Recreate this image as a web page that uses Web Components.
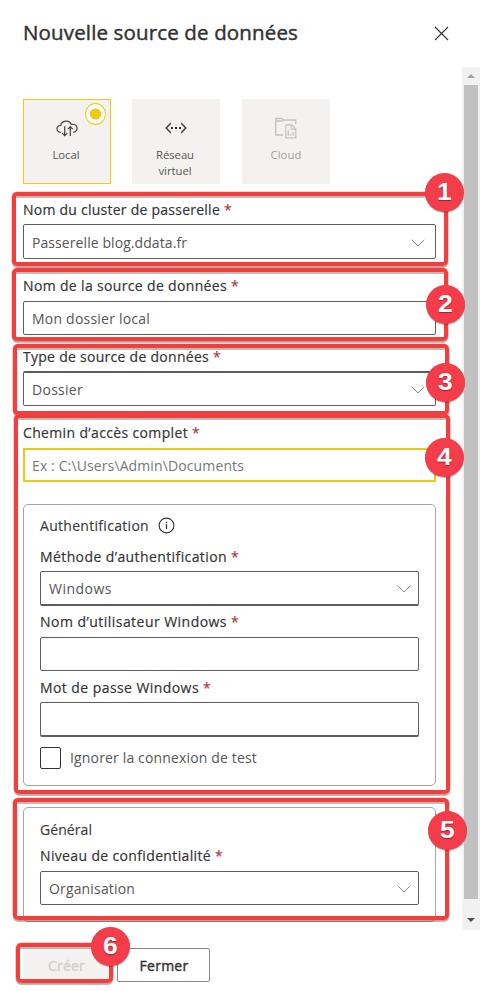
<!DOCTYPE html>
<html lang="fr">
<head>
<meta charset="utf-8">
<title>Nouvelle source de données</title>
<style>
html,body{margin:0;width:480px;height:991px;overflow:hidden;background:#fff}
body{font-family:"Open Sans","Noto Sans",sans-serif;color:#333}
</style>
</head>
<body>
<source-dialog></source-dialog>
<script>
const define = (name, html, ready) => {
  const t = document.createElement('template');
  t.innerHTML = html;
  customElements.define(name, class extends HTMLElement {
    constructor() {
      super();
      this.attachShadow({mode: 'open'}).append(t.content.cloneNode(true));
    }
    connectedCallback() { if (ready) ready(this, this.shadowRoot); }
  });
};

/* One line of text tracked to a given width. */
define('fit-text', `<style>:host{display:inline-block;white-space:nowrap;flex:none}span{display:inline-block}</style><span><slot></slot></span>`, (el, root) => {
  const w = +el.getAttribute('w'), s = root.querySelector('span');
  s.style.letterSpacing = '0px';
  const n = s.getBoundingClientRect().width;
  s.style.letterSpacing = ((w - n) / el.textContent.length) + 'px';
  el.style.width = w + 'px';
});

define('close-icon', `<style>:host{display:block;width:15px;height:15px}svg{display:block}</style>
<svg width="15" height="15" viewBox="0 0 15 15"><path d="M1 1L14 14M14 1L1 14" stroke="#333" stroke-width="1.1"/></svg>`);

define('dialog-header', `<style>:host{display:flex;justify-content:space-between;align-items:flex-start;box-sizing:border-box;height:67px;padding:17px 31px 0 23px;font-size:20.5px;line-height:31px;-webkit-text-stroke:.45px}close-icon{margin-top:9px}</style><slot></slot><close-icon></close-icon>`);

define('option-tile', `<style>
:host{display:flex;flex-direction:column;align-items:center;box-sizing:border-box;width:88px;height:85px;background:#f3f2f1;padding-top:18px;position:relative;font-size:11.3px;line-height:16px;color:#555}
:host([selected]){box-shadow:inset 0 0 0 1px #f2c811}
:host([disabled]){color:#a19f9d}
.icon{height:24px;margin-bottom:6px}
.text{display:flex;flex-direction:column;align-items:center;margin-right:2px}
:host([disabled]) .text{margin-right:0}
i{display:none;position:absolute;right:5px;top:4px;width:21px;height:22px;box-sizing:border-box;border:1px solid #f2c811;border-radius:50%;background:radial-gradient(circle,#f2c811 5.2px,#fff 5.9px)}
:host([selected]) i{display:block}
</style><div class="icon"><slot name="icon"></slot></div><div class="text"><slot></slot></div><i></i>`);

define('required-label', `<style>:host{display:flex;gap:4px;height:20px;line-height:22px;font-size:14px;-webkit-text-stroke:.18px;color:#333}b{color:#b5343a;font-weight:400}</style><slot></slot><b>*</b>`);

define('input-box', `<style>
:host{display:flex;justify-content:space-between;align-items:center;box-sizing:border-box;height:var(--h,35px);padding:var(--pt,1px) var(--pr,10px) 0 8px;border:1px solid #605e5c;border-radius:2px;font-size:14px;line-height:20px;color:#555;background:#fff}
:host([focus]){border:2px solid #f2c811;padding:1px 9px 0 7px;border-radius:0;color:#777}
:host([top]){border-top-width:2px}
:host([bottom]){border-bottom-width:2px}
svg{display:none;flex:none;margin-left:auto}
:host([select]) svg{display:block}
</style><slot></slot><svg width="14" height="8" viewBox="0 0 14 8"><path d="M.7.8L7 7L13.3.8" fill="none" stroke="#8a8886"/></svg>`);

define('form-field', `<style>:host{display:flex;flex-direction:column;gap:var(--gap,5px)}</style><slot name="label"></slot><slot></slot>`);

define('field-panel', `<style>:host{display:block;box-sizing:border-box;border:1px solid #a6a6a6;border-radius:5px;padding:0 16px;--pr:7px;--pt:1px}</style><slot></slot>`);

define('section-title', `<style>:host{display:flex;align-items:center;gap:9px;height:20px;line-height:20px;font-size:14px;-webkit-text-stroke:.15px;color:#3b3a39}::slotted(fit-text){margin-top:2px}</style><slot></slot>`);

define('info-icon', `<style>:host{display:block;height:17px}svg{display:block}</style>
<svg width="17" height="17" viewBox="0 0 17 17"><circle cx="8.5" cy="8.5" r="7.4" fill="none" stroke="#333" stroke-width="1.1"/><path d="M8.5 7.3V12M8.5 4.8V6.1" stroke="#333" stroke-width="1.3"/></svg>`);

define('check-option', `<style>:host{display:flex;align-items:center;gap:9px;height:22px;font-size:14px;line-height:20px;color:#555}i{box-sizing:border-box;width:21px;height:22px;border:1px solid #333;border-radius:2px}</style><i></i><slot></slot>`);

define('scroll-bar', `<style>:host{display:flex;flex-direction:column;align-items:center;width:18px;height:863px;background:#f1f1f1}
div{width:14px;height:814px;background:#c1c1c1}svg{display:block;flex:none}</style>
<svg width="18" height="18" viewBox="0 0 18 18"><path d="M5 11L9 7L13 11Z" fill="#a3a3a3"/></svg><div></div>
<svg width="18" height="31" viewBox="0 0 18 31"><path d="M5 19L9 23L13 19Z" fill="#505050"/></svg>`);

define('action-button', `<style>:host{display:flex;align-items:center;justify-content:center;box-sizing:border-box;height:34px;width:93px;border:1px solid #8a8886;border-radius:2px;padding:1px 0 0 1px;font-size:14px;-webkit-text-stroke:.4px;line-height:20px;color:#323130;background:#fff}
:host([disabled]){width:86px;border-color:#f3f2f1;background:#f3f2f1;color:#d2d0ce}</style><slot></slot>`);

/* Numbered frame laid over a part of the form. */
define('call-out', `<style>
:host{position:absolute;box-sizing:border-box;border:4.5px solid #f53d3c;border-radius:5px;box-shadow:0 0 0 .6px #b8666680,0 2px 0 #0004,inset 0 2px 0 #0004}
i{position:absolute;width:39px;height:39px;border-radius:50%;background:#f43c4b;color:#fff;font:bold 23px/39px "Liberation Sans",sans-serif;text-align:center;text-shadow:0 1px 1px #0006;box-shadow:0 1px 0 #0004}
span{display:inline-block;transform:scaleX(1.15)}
</style><i><span><slot></slot></span></i>`, (el, root) => {
  const [x, y, w, h, cx, cy] = el.getAttribute('box').split(' ').map(Number);
  Object.assign(el.style, {left: x + 'px', top: y + 'px', width: w + 'px', height: h + 'px'});
  const b = root.querySelector('i');
  b.style.left = (cx - x - 4 - 19.5) + 'px';
  b.style.top = (cy - y - 4 - 19.5) + 'px';
});

define('source-dialog', `<style>
:host{display:block;position:relative;width:480px;height:991px;background:#fff}
.main{display:flex;justify-content:space-between;height:863px}
.form{width:413px;margin-left:23px;padding-top:32px;box-sizing:border-box;height:855px;overflow:hidden}
.tiles{display:grid;grid-template-columns:109px 110px 88px;margin-bottom:15px}
.footer{display:flex;gap:8px;padding:18px 23px 0}
svg{display:block}
</style>
<dialog-header><fit-text w="275">Nouvelle source de données</fit-text></dialog-header>
<div class="main">
 <div class="form">
  <div class="tiles">
   <option-tile selected><svg slot="icon" width="22" height="24" viewBox="0 0 22 24"><path d="M5 15.4C-.3 14.8-.3 8.4 4.7 8.5C5.5 3.1 13.3 2.5 15.3 7.3C22.6 6.7 22.7 14.5 17.3 15.3M8.7 9.2V18.6M6.2 16.2L8.7 18.7L11.2 16.2M14.3 19V9.7M11.8 12.2L14.3 9.7L16.8 12.2" fill="none" stroke="#404040" stroke-width="1.2"/></svg><fit-text w="27">Local</fit-text></option-tile>
   <option-tile><svg slot="icon" width="22" height="24" viewBox="0 0 22 24"><path d="M5.8 6.2L1.2 11L5.8 15.8M16.2 6.2L20.8 11L16.2 15.8" fill="none" stroke="#333" stroke-width="1.3"/><path d="M6 10h2v2H6zM10 10h2v2h-2zM14 10h2v2h-2z" fill="#333"/></svg><fit-text w="38">Réseau</fit-text><fit-text w="33">virtuel</fit-text></option-tile>
   <option-tile disabled><svg slot="icon" width="22" height="24" viewBox="0 0 22 24"><path d="M8 18H.8V1.5H7L8.5 3H20.8V7M.8 4H7.5L8.7 3" fill="none" stroke="#c4c2c0" stroke-width="1.3"/><path d="M10.8 7.8H16.5L20.8 12V20.8H10.8ZM16.2 8V12.2H20.5M13.3 18.8V13.5M15.8 18.8V16.5M18.3 18.8V15" fill="none" stroke="#c4c2c0" stroke-width="1.2"/></svg><fit-text w="31">Cloud</fit-text></option-tile>
  </div>
  <form-field><required-label slot="label"><fit-text w="197">Nom du cluster de passerelle</fit-text></required-label><input-box select style="--pt:2px"><fit-text w="155">Passerelle blog.ddata.fr</fit-text></input-box></form-field>
  <form-field style="--gap:6px;--h:34px;margin-top:16px"><required-label slot="label"><fit-text w="204">Nom de la source de données</fit-text></required-label><input-box style="--pt:2px"><fit-text w="118">Mon dossier local</fit-text></input-box></form-field>
  <form-field style="margin-top:11px"><required-label slot="label"><fit-text w="186">Type de source de données</fit-text></required-label><input-box select top style="--pt:2px"><fit-text w="51">Dossier</fit-text></input-box></form-field>
  <form-field style="--gap:6px;--h:34px;margin-top:16px"><required-label slot="label"><fit-text w="165">Chemin d’accès complet</fit-text></required-label><input-box focus><fit-text w="212">Ex : C:\\Users\\Admin\\Documents</fit-text></input-box></form-field>
  <field-panel style="margin-top:22px;height:282px;padding-top:10px">
   <section-title><fit-text w="109">Authentification</fit-text><info-icon></info-icon></section-title>
   <form-field style="margin-top:11px"><required-label slot="label"><fit-text w="187">Méthode d’authentification</fit-text></required-label><input-box select bottom><fit-text w="63">Windows</fit-text></input-box></form-field>
   <form-field style="--gap:6px;--h:34px;margin-top:5px"><required-label slot="label"><fit-text w="187">Nom d’utilisateur Windows</fit-text></required-label><input-box></input-box></form-field>
   <form-field style="margin-top:6px"><required-label slot="label"><fit-text w="159">Mot de passe Windows</fit-text></required-label><input-box bottom></input-box></form-field>
   <check-option style="margin-top:10px"><fit-text w="187">Ignorer la connexion de test</fit-text></check-option>
  </field-panel>
  <field-panel style="margin-top:21px;height:115px;padding-top:11px">
   <section-title><fit-text w="52">Général</fit-text></section-title>
   <form-field style="--gap:6px;--h:34px;margin-top:6px"><required-label slot="label"><fit-text w="171">Niveau de confidentialité</fit-text></required-label><input-box select><fit-text w="86">Organisation</fit-text></input-box></form-field>
  </field-panel>
 </div>
 <scroll-bar></scroll-bar>
</div>
<div class="footer"><action-button disabled><fit-text w="37">Créer</fit-text></action-button><action-button><fit-text w="49">Fermer</fit-text></action-button></div>
<call-out box="12 191.5 435.5 74.5 444.5 192.5">1</call-out>
<call-out box="12 268 435.5 73 445.5 304.5">2</call-out>
<call-out box="13 344 435.5 71 445.5 382.5">3</call-out>
<call-out box="14 414 435.5 380 444.5 457">4</call-out>
<call-out box="13 798 436 121.5 447.5 830.5">5</call-out>
<call-out box="16 943 96.5 40 110.5 946">6</call-out>`);
</script>
</body>
</html>
